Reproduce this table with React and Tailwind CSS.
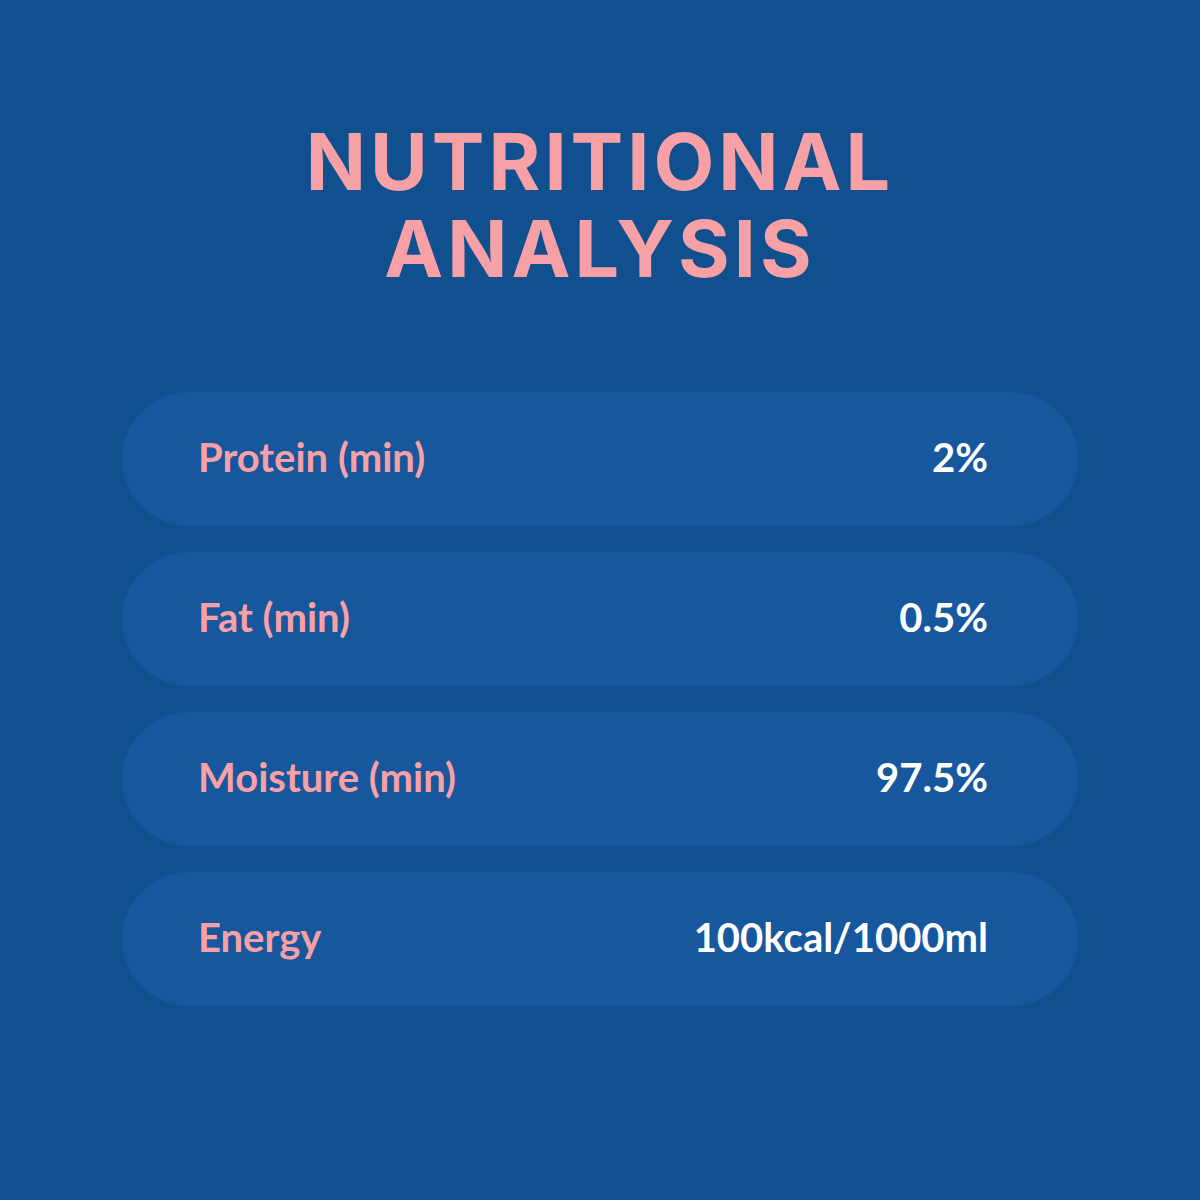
import React from "react";

const rows = [
  { label: "Protein (min)", value: "2%" },
  { label: "Fat (min)", value: "0.5%" },
  { label: "Moisture (min)", value: "97.5%" },
  { label: "Energy", value: "100kcal/1000ml" },
];

export default function App() {
  return (
    <div className="w-[1200px] h-[1200px] bg-[#11508f] flex flex-col items-center pt-[118px]">
      <h1
        className="text-[#f7a1a6] text-[79px] font-bold leading-[87px] text-center tracking-[4px]"
        style={{ fontFamily: "Inter, 'Noto Sans', sans-serif" }}
      >
        NUTRITIONAL
        <br />
        ANALYSIS
      </h1>

      <div className="mt-[100px] w-[956px] flex flex-col gap-[26px]">
        {rows.map((r) => (
          <div
            key={r.label}
            className="h-[134px] rounded-full bg-[#17579d] flex items-center justify-between pl-[76px] pr-[90px] pb-[4px]"
            style={{ fontFamily: "Lato, 'Open Sans', sans-serif" }}
          >
            <span className="text-[#f7a1a6] text-[40px] font-bold">{r.label}</span>
            <span className="text-white text-[40px] font-bold">{r.value}</span>
          </div>
        ))}
      </div>
    </div>
  );
}
